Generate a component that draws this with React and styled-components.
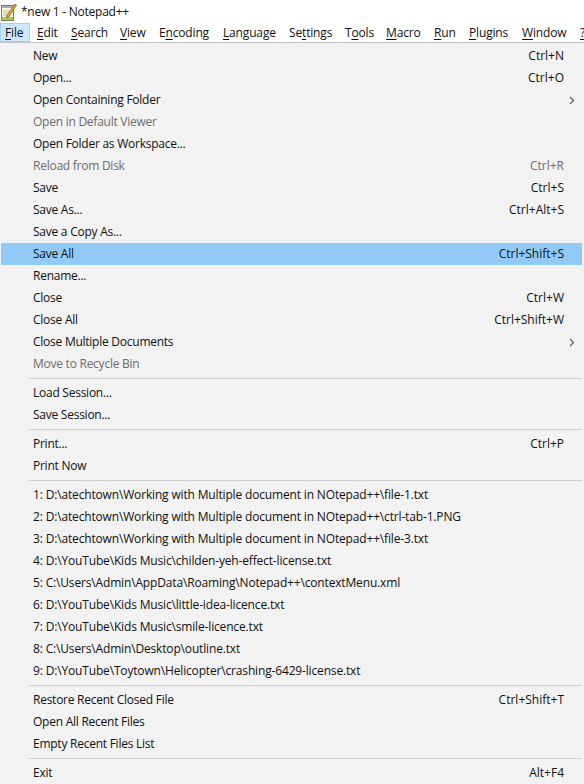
import React from "react";
import styled, { createGlobalStyle } from "styled-components";

const GlobalStyle = createGlobalStyle`
  html, body {
    margin: 0;
    padding: 0;
    background: #ffffff;
  }
  body {
    font-family: "Open Sans", "Noto Sans", "Liberation Sans", sans-serif;
    font-size: 12px;
    letter-spacing: -0.16px;
    color: #111111;
  }
`;

const Page = styled.div`
  width: 584px;
  height: 784px;
  overflow: hidden;
  display: flex;
  flex-direction: column;
`;

const TitleBar = styled.div`
  height: 23px;
  display: flex;
  align-items: center;
  gap: 4px;
  padding-left: 1px;
  letter-spacing: -0.25px;
`;

const MenuBar = styled.div`
  height: 19px;
  display: flex;
  border-bottom: 1px solid #c4c4c4;
`;

const MenuItem = styled.div`
  width: ${(p) => p.$w}px;
  flex: none;
  box-sizing: border-box;
  margin-right: ${(p) => (p.$active ? 7 : 0)}px;
  padding-left: ${(p) => (p.$active ? 5 : 0)}px;
  line-height: 19px;
  white-space: nowrap;
  background: ${(p) => (p.$active ? "#cce8ff" : "transparent")};
  box-shadow: ${(p) => (p.$active ? "inset 0 0 0 1px #99d1ff" : "none")};
  u { text-underline-offset: 2px; }
`;

const Dropdown = styled.div`
  flex: 1;
  background: #f2f2f2;
  padding-top: 2px;
`;

const Row = styled.div`
  height: 22px;
  box-sizing: border-box;
  margin: 0 2px 0 1px;
  padding: 0 18px 1px 32px;
  display: flex;
  align-items: center;
  white-space: nowrap;
  color: ${(p) => (p.$disabled ? "#6d6d6d" : "#111111")};
  background: ${(p) => (p.$active ? "#91c9f7" : "transparent")};
  position: relative;
`;

const Label = styled.span`
  flex: 1;
  letter-spacing: ${(p) => (p.$path ? "-0.16px" : "-0.25px")};
`;

const Shortcut = styled.span`
  letter-spacing: 0;
`;

const Arrow = styled.svg`
  position: absolute;
  right: 7px;
  top: 7px;
  width: 6px;
  height: 9px;
`;

const Separator = styled.div`
  height: 1px;
  margin: 3px 2px 3px 29px;
  background: #cfcfcf;
`;

const menus = [
  ["", "F", "ile", 30, true],
  ["", "E", "dit", 34],
  ["", "S", "earch", 49],
  ["", "V", "iew", 39],
  ["E", "n", "coding", 64],
  ["", "L", "anguage", 66],
  ["Se", "t", "tings", 56],
  ["T", "o", "ols", 41],
  ["", "M", "acro", 48],
  ["", "R", "un", 35],
  ["", "P", "lugins", 53],
  ["", "W", "indow", 58],
  ["", "?", "", 20],
];

const sections = [
  [
    { t: "New", k: "Ctrl+N" },
    { t: "Open...", k: "Ctrl+O" },
    { t: "Open Containing Folder", sub: true },
    { t: "Open in Default Viewer", off: true },
    { t: "Open Folder as Workspace..." },
    { t: "Reload from Disk", k: "Ctrl+R", off: true },
    { t: "Save", k: "Ctrl+S" },
    { t: "Save As...", k: "Ctrl+Alt+S" },
    { t: "Save a Copy As..." },
    { t: "Save All", k: "Ctrl+Shift+S", active: true },
    { t: "Rename..." },
    { t: "Close", k: "Ctrl+W" },
    { t: "Close All", k: "Ctrl+Shift+W" },
    { t: "Close Multiple Documents", sub: true },
    { t: "Move to Recycle Bin", off: true },
  ],
  [{ t: "Load Session..." }, { t: "Save Session..." }],
  [{ t: "Print...", k: "Ctrl+P" }, { t: "Print Now" }],
  [
    { t: "1: D:\\atechtown\\Working with Multiple document in NOtepad++\\file-1.txt", path: true },
    { t: "2: D:\\atechtown\\Working with Multiple document in NOtepad++\\ctrl-tab-1.PNG", path: true },
    { t: "3: D:\\atechtown\\Working with Multiple document in NOtepad++\\file-3.txt", path: true },
    { t: "4: D:\\YouTube\\Kids Music\\childen-yeh-effect-license.txt", path: true },
    { t: "5: C:\\Users\\Admin\\AppData\\Roaming\\Notepad++\\contextMenu.xml", path: true },
    { t: "6: D:\\YouTube\\Kids Music\\little-idea-licence.txt", path: true },
    { t: "7: D:\\YouTube\\Kids Music\\smile-licence.txt", path: true },
    { t: "8: C:\\Users\\Admin\\Desktop\\outline.txt", path: true },
    { t: "9: D:\\YouTube\\Toytown\\Helicopter\\crashing-6429-license.txt", path: true },
  ],
  [
    { t: "Restore Recent Closed File", k: "Ctrl+Shift+T" },
    { t: "Open All Recent Files" },
    { t: "Empty Recent Files List" },
  ],
  [{ t: "Exit", k: "Alt+F4" }],
];

const NotepadIcon = () => (
  <svg width="16" height="20" viewBox="0 0 16 20">
    <rect x="0.5" y="3.5" width="12" height="15" fill="#f6f7dc" stroke="#74805a" />
    <path d="M1 4h11v2H1z" fill="#c9ced2" />
    <path d="M2 4v2M4 4v2M6 4v2M8 4v2M10 4v2" stroke="#6f7478" strokeWidth="0.7" />
    <path d="M2 9h9M2 11h9M2 13h7" stroke="#c3c9ac" />
    <path d="M1 15h11v3H1z" fill="#a9c84a" />
    <path d="M6 13L14 2l1.6 1.2L8 14.5l-2.6 1z" fill="#eda31f" stroke="#6e4310" strokeWidth="0.6" />
  </svg>
);

const App = () => {
  return (
    <Page>
      <GlobalStyle />
      <TitleBar>
        <NotepadIcon />
        <span>*new 1 - Notepad++</span>
      </TitleBar>
      <MenuBar>
        {menus.map(([a, u, b, w, active]) => (
          <MenuItem key={a + u + b} $w={w} $active={active}>
            {a}<u>{u}</u>{b}
          </MenuItem>
        ))}
      </MenuBar>
      <Dropdown>
        {sections.map((rows, i) => (
          <div key={i}>
            {i > 0 && <Separator />}
            {rows.map((r) => (
              <Row key={r.t} $disabled={r.off} $active={r.active}>
                <Label $path={r.path}>{r.t}</Label>
                {r.k && <Shortcut>{r.k}</Shortcut>}
                {r.sub && (
                  <Arrow viewBox="0 0 6 9">
                    <path d="M1 1l3.5 3.5L1 8" fill="none" stroke="#555" strokeWidth="1.1" />
                  </Arrow>
                )}
              </Row>
            ))}
          </div>
        ))}
      </Dropdown>
    </Page>
  );
};

export default App;
